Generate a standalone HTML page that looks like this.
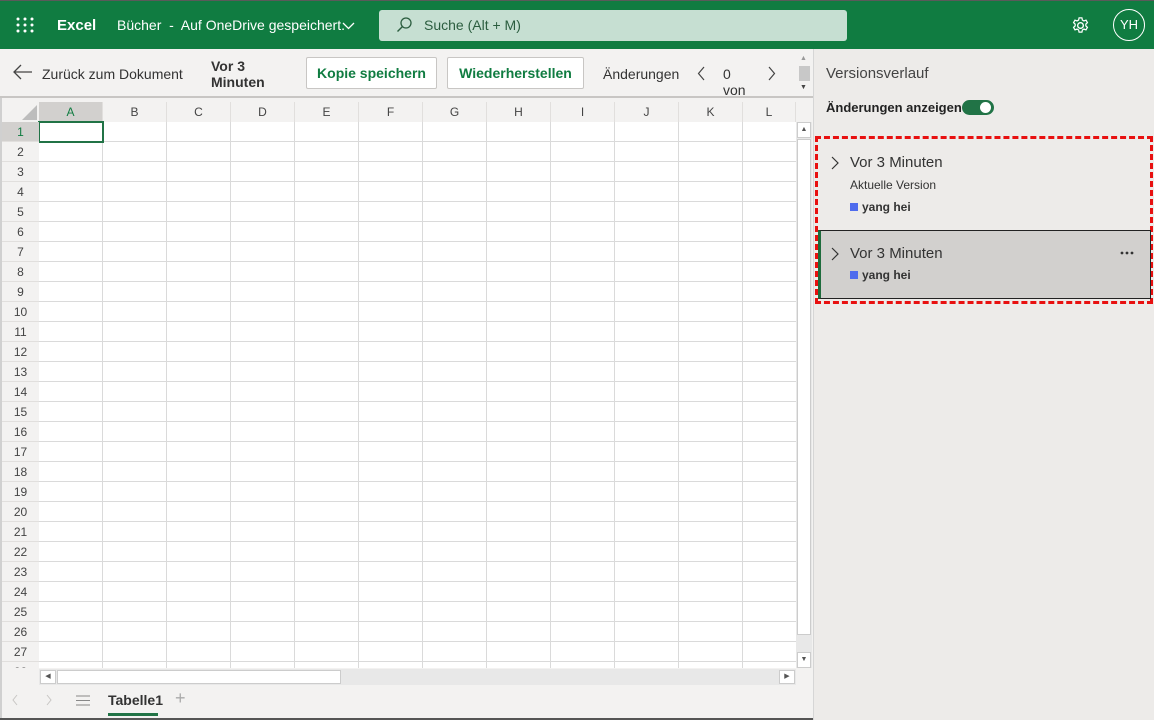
<!DOCTYPE html>
<html><head><meta charset="utf-8"><style>
*{box-sizing:border-box;margin:0;padding:0}
body{width:1154px;height:720px;overflow:hidden;font-family:"Liberation Sans",sans-serif;background:#fff;position:relative}
.a{position:absolute}
.top{left:0;top:0;width:1154px;height:49px;background:#107c41;border-top:1px solid #5a5a5a}
.tb{left:0;top:49px;width:813px;height:49px;background:#f3f2f1;border-bottom:2px solid #c8c6c4}
.btn{top:57px;height:32px;background:#fff;border:1px solid #c8c6c4;border-radius:2px;color:#107c41;font-weight:bold;font-size:14px;line-height:30px;text-align:center}
.ch{top:102px;height:20px;width:64px;background:#f3f2f1;border-right:1px solid #e1dfdd;font-size:12px;color:#444;text-align:center;line-height:20px}
.rh{left:2px;width:37px;height:20px;background:#f3f2f1;font-size:12px;color:#444;text-align:center;line-height:20px;border-bottom:1px solid #e1dfdd}
.grid{left:39px;top:122px;width:757px;height:546px;background-color:#fff;background-image:linear-gradient(to right,transparent 63px,#dadada 63px);background-size:64px 20px;}
.gridh{left:39px;top:122px;width:757px;height:546px;background-image:linear-gradient(to bottom,transparent 19px,#dadada 19px);background-size:64px 20px}
.panel{left:813px;top:49px;width:341px;height:671px;background:#edebe9;border-left:1px solid #d6d6d6}
.sq{display:inline-block;width:8px;height:8px;background:#4f6bed;margin-right:4px}
</style></head><body>
<div class="a top">
 <svg class="a" style="left:16px;top:16px" width="18" height="16"><g fill="#fff"><circle cx="2" cy="2" r="1.5"/><circle cx="9" cy="2" r="1.5"/><circle cx="16" cy="2" r="1.5"/><circle cx="2" cy="8" r="1.5"/><circle cx="9" cy="8" r="1.5"/><circle cx="16" cy="8" r="1.5"/><circle cx="2" cy="14" r="1.5"/><circle cx="9" cy="14" r="1.5"/><circle cx="16" cy="14" r="1.5"/></g></svg>
 <div class="a" style="left:57px;top:16px;color:#fff;font-weight:bold;font-size:15px">Excel</div>
 <div class="a" style="left:117px;top:16px;color:#fff;font-size:14px">Bücher &nbsp;-&nbsp; Auf OneDrive gespeichert.</div>
 <svg class="a" style="left:342px;top:21px" width="13" height="8"><path d="M1 1l5.5 5.5L12 1" fill="none" stroke="#fff" stroke-width="1.3"/></svg>
 <div class="a" style="left:379px;top:9px;width:468px;height:31px;background:#c6dfd2;border-radius:3px"></div>
 <svg class="a" style="left:396px;top:16px" width="16" height="16"><circle cx="10" cy="6" r="5" fill="none" stroke="#2b5d3f" stroke-width="1.3"/><path d="M6.5 9.5L1.5 14.5" stroke="#2b5d3f" stroke-width="1.4"/></svg>
 <div class="a" style="left:424px;top:16px;color:#2b5d3f;font-size:14px">Suche (Alt + M)</div>
 <svg class="a" style="left:1071px;top:15px" width="19" height="19" viewBox="0 0 20 20"><circle cx="10" cy="10" r="3" fill="none" stroke="#fff" stroke-width="1.4"/><path d="M8.5 2h3l.5 2.3 1.6.9 2.2-.8 1.5 2.6-1.7 1.6v1.8l1.7 1.6-1.5 2.6-2.2-.8-1.6.9-.5 2.3h-3l-.5-2.3-1.6-.9-2.2.8-1.5-2.6 1.7-1.6V8.6L2.7 7l1.5-2.6 2.2.8 1.6-.9z" fill="none" stroke="#fff" stroke-width="1.3"/></svg>
 <div class="a" style="left:1113px;top:8px;width:32px;height:32px;border:1px solid #fff;border-radius:50%;color:#fff;font-size:13px;text-align:center;line-height:30px">YH</div>
</div>
<div class="a tb">
 <svg class="a" style="left:13px;top:15px" width="20" height="16"><path d="M1 8h18M8 1L1 8l7 7" fill="none" stroke="#444" stroke-width="1.3"/></svg>
 <div class="a" style="left:42px;top:17px;font-size:14px;color:#333">Zurück zum Dokument</div>
 <div class="a" style="left:211px;top:9px;font-size:14px;font-weight:bold;color:#333;line-height:16px">Vor 3<br>Minuten</div>
 <div class="a" style="left:603px;top:17px;font-size:14px;color:#333">Änderungen</div>
 <svg class="a" style="left:697px;top:17px" width="9" height="15"><path d="M7 1L1.5 7.5 7 14" fill="none" stroke="#444" stroke-width="1.2"/></svg>
 <div class="a" style="left:723px;top:17px;font-size:14px;color:#333">0</div>
 <div class="a" style="left:723px;top:33px;font-size:14px;color:#333">von</div>
 <svg class="a" style="left:767px;top:17px" width="9" height="15"><path d="M2 1l5.5 6.5L2 14" fill="none" stroke="#444" stroke-width="1.2"/></svg>
 <div class="a" style="left:799px;top:17px;width:11px;height:15px;background:#c8c8c8"></div>
 <div class="a" style="left:800px;top:6px;font-size:7px;color:#999">&#9650;</div>
 <div class="a" style="left:800px;top:35px;font-size:7px;color:#444">&#9660;</div>
</div>
<div class="a btn" style="left:306px;width:131px">Kopie speichern</div>
<div class="a btn" style="left:447px;width:137px">Wiederherstellen</div>

<div class="a" style="left:0;top:98px;width:813px;height:622px;background:#f3f2f1;border-left:2px solid #d0d0d0"></div>
<div class="a" style="left:2px;top:102px;width:37px;height:20px;background:#f3f2f1"></div>
<svg class="a" style="left:22px;top:105px" width="15" height="15"><path d="M15 0V15H0z" fill="#bdbdbd"/></svg>
<div class="a ch" style="left:39px;background:#d2d0ce;color:#107c41">A</div>
<div class="a ch" style="left:103px">B</div><div class="a ch" style="left:167px">C</div><div class="a ch" style="left:231px">D</div><div class="a ch" style="left:295px">E</div><div class="a ch" style="left:359px">F</div><div class="a ch" style="left:423px">G</div><div class="a ch" style="left:487px">H</div><div class="a ch" style="left:551px">I</div><div class="a ch" style="left:615px">J</div><div class="a ch" style="left:679px">K</div><div class="a ch" style="left:743px;width:53px">L</div>
<div class="a grid"></div><div class="a gridh"></div>
<div class="a" style="left:38px;top:121px;width:66px;height:22px;border:2px solid #217346"></div>
<div class="a" style="left:2px;top:122px;width:37px;height:546px;overflow:hidden">
<div class="a rh" style="top:0;left:0;background:#d2d0ce;color:#107c41">1</div>
<div class="a rh" style="top:20px;left:0">2</div><div class="a rh" style="top:40px;left:0">3</div><div class="a rh" style="top:60px;left:0">4</div><div class="a rh" style="top:80px;left:0">5</div><div class="a rh" style="top:100px;left:0">6</div><div class="a rh" style="top:120px;left:0">7</div><div class="a rh" style="top:140px;left:0">8</div><div class="a rh" style="top:160px;left:0">9</div><div class="a rh" style="top:180px;left:0">10</div><div class="a rh" style="top:200px;left:0">11</div><div class="a rh" style="top:220px;left:0">12</div><div class="a rh" style="top:240px;left:0">13</div><div class="a rh" style="top:260px;left:0">14</div><div class="a rh" style="top:280px;left:0">15</div><div class="a rh" style="top:300px;left:0">16</div><div class="a rh" style="top:320px;left:0">17</div><div class="a rh" style="top:340px;left:0">18</div><div class="a rh" style="top:360px;left:0">19</div><div class="a rh" style="top:380px;left:0">20</div><div class="a rh" style="top:400px;left:0">21</div><div class="a rh" style="top:420px;left:0">22</div><div class="a rh" style="top:440px;left:0">23</div><div class="a rh" style="top:460px;left:0">24</div><div class="a rh" style="top:480px;left:0">25</div><div class="a rh" style="top:500px;left:0">26</div><div class="a rh" style="top:520px;left:0">27</div><div class="a rh" style="top:540px;left:0">28</div>
</div>
<!-- v scrollbar -->
<div class="a" style="left:796px;top:122px;width:16px;height:546px;background:#e8e8e8"></div>
<div class="a" style="left:797px;top:122px;width:14px;height:16px;background:#fff;border:1px solid #ccc;font-size:7px;text-align:center;line-height:14px;color:#555">&#9650;</div>
<div class="a" style="left:797px;top:139px;width:14px;height:496px;background:#fff;border:1px solid #ccc"></div>
<div class="a" style="left:797px;top:652px;width:14px;height:16px;background:#fff;border:1px solid #ccc;font-size:7px;text-align:center;line-height:14px;color:#555">&#9660;</div>
<!-- h scrollbar -->
<div class="a" style="left:39px;top:669px;width:757px;height:16px;background:#e8e8e8"></div>
<div class="a" style="left:40px;top:670px;width:16px;height:14px;background:#fff;border:1px solid #ccc;font-size:7px;text-align:center;line-height:12px;color:#555">&#9664;</div>
<div class="a" style="left:57px;top:670px;width:284px;height:14px;background:#fff;border:1px solid #ccc"></div>
<div class="a" style="left:779px;top:670px;width:16px;height:14px;background:#fff;border:1px solid #ccc;font-size:7px;text-align:center;line-height:12px;color:#555">&#9654;</div>
<!-- tabs -->
<svg class="a" style="left:12px;top:694px" width="6" height="12"><path d="M5 1L1 6l4 5" fill="none" stroke="#c8c6c4"/></svg>
<svg class="a" style="left:46px;top:694px" width="6" height="12"><path d="M1 1l4 5-4 5" fill="none" stroke="#c8c6c4"/></svg>
<svg class="a" style="left:76px;top:695px" width="14" height="11"><path d="M0 1h14M0 5.5h14M0 10h14" stroke="#888" stroke-width="1"/></svg>
<div class="a" style="left:108px;top:692px;font-size:14px;font-weight:bold;color:#333">Tabelle1</div>
<div class="a" style="left:108px;top:713px;width:50px;height:3px;background:#217346"></div>
<div class="a" style="left:175px;top:688px;font-size:18px;color:#aaa">+</div>
<div class="a" style="left:0;top:718px;width:813px;height:2px;background:#555"></div>
<!-- panel -->
<div class="a panel">
 <div class="a" style="left:12px;top:16px;font-size:15px;color:#444">Versionsverlauf</div>
 <div class="a" style="left:12px;top:51px;font-size:13px;font-weight:bold;color:#222">Änderungen anzeigen</div>
 <div class="a" style="left:148px;top:51px;width:32px;height:15px;background:#217346;border-radius:8px"><div class="a" style="left:18px;top:2px;width:11px;height:11px;border-radius:50%;background:#fff"></div></div>
 <div class="a" style="left:1px;top:87px;width:338px;height:168px;border:3px dashed #e81010"></div>
 <div class="a" style="left:4px;top:181px;width:333px;height:69px;background:#d2d0ce;border:1px solid #222;border-left:3px solid #1e6b3c"></div>
 <svg class="a" style="left:16px;top:107px" width="10" height="14"><path d="M2 1l6 6-6 6" fill="none" stroke="#333" stroke-width="1.2"/></svg>
 <div class="a" style="left:36px;top:105px;font-size:15px;color:#333">Vor 3 Minuten</div>
 <div class="a" style="left:36px;top:129px;font-size:12px;color:#333">Aktuelle Version</div>
 <div class="a" style="left:36px;top:151px;font-size:12px;font-weight:bold;color:#333"><span class="sq"></span>yang hei</div>
 <svg class="a" style="left:16px;top:198px" width="10" height="14"><path d="M2 1l6 6-6 6" fill="none" stroke="#333" stroke-width="1.2"/></svg>
 <div class="a" style="left:36px;top:196px;font-size:15px;color:#333">Vor 3 Minuten</div>
 <svg class="a" style="left:306px;top:202px" width="14" height="4"><g fill="#333"><circle cx="2" cy="2" r="1.4"/><circle cx="7" cy="2" r="1.4"/><circle cx="12" cy="2" r="1.4"/></g></svg>
 <div class="a" style="left:36px;top:219px;font-size:12px;font-weight:bold;color:#333"><span class="sq"></span>yang hei</div>
</div>
</body></html>
